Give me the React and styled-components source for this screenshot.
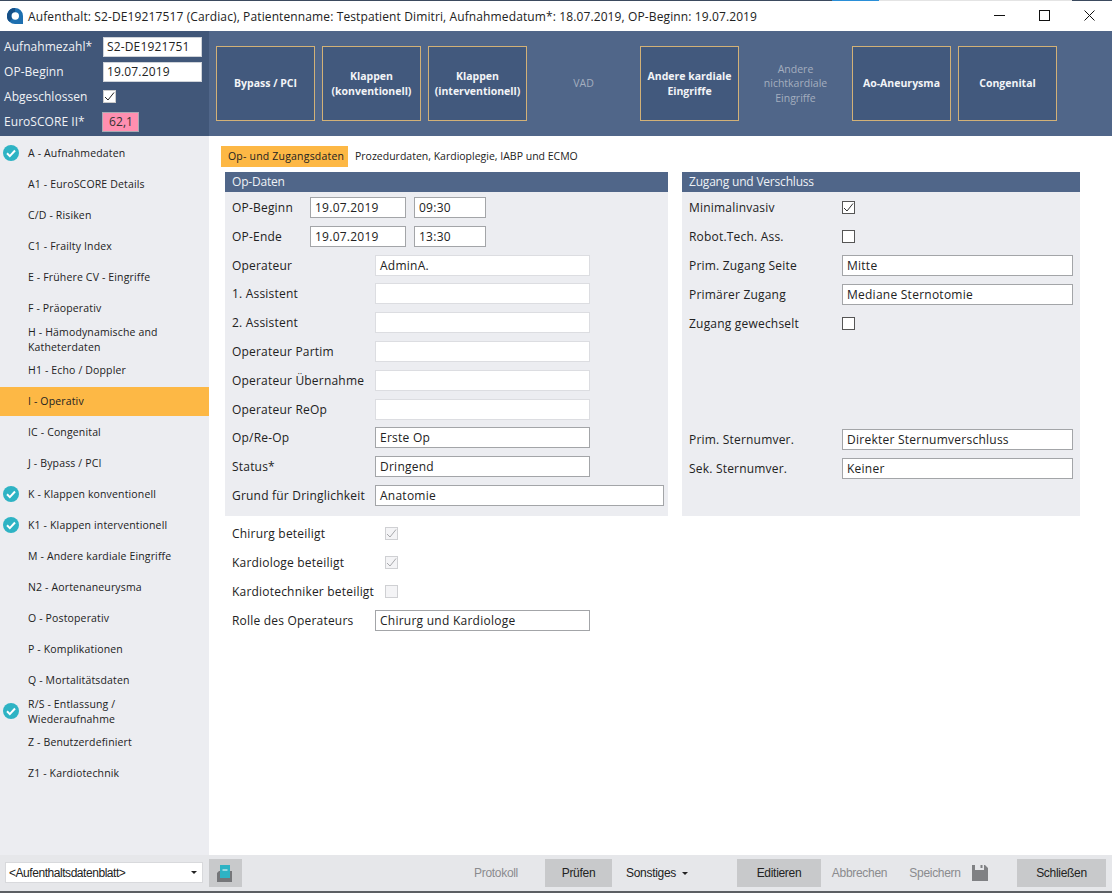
import React from 'react';
import styled, { createGlobalStyle } from 'styled-components';

const Global = createGlobalStyle`
  html, body { margin: 0; padding: 0; background: #fff; }
  body { font-family: "Open Sans", "Noto Sans", sans-serif; color: #222; }
  * { box-sizing: border-box; }
`;
const Win = styled.div`width:1112px;height:893px;display:flex;flex-direction:column;overflow:hidden;background:#fff;`;
const TopEdge = styled.div`height:1px;flex:none;background:linear-gradient(90deg,#3b4a5e 0,#3b4a5e 832px,#2a8fd8 832px,#2a8fd8 879px,#e4e4e4 879px,#e4e4e4 1072px,#3b4a5e 1072px);`;
const TitleBar = styled.div`height:30px;flex:none;display:flex;align-items:center;padding-left:7px;background:#fff;`;
const TitleText = styled.div`margin-left:5px;font-size:12px;letter-spacing:.115px;color:#222;white-space:nowrap;flex:1;`;
const WinBtn = styled.div`width:45px;height:30px;padding-bottom:2px;display:flex;align-items:center;justify-content:center;flex:none;`;
const Header = styled.div`height:105px;flex:none;display:flex;background:#506689;`;
const HeaderInfo = styled.div`width:209px;flex:none;background:#415779;padding:3px 7px 0 4px;`;
const InfoRow = styled.div`display:flex;align-items:center;height:25px;color:#f0f2f5;font-size:12px;letter-spacing:.05px;`;
const InfoLabel = styled.span`width:99px;flex:none;white-space:nowrap;`;
const InfoField = styled.div`width:99px;height:20px;background:#fff;color:#222;padding-left:4px;line-height:20px;font-size:12px;letter-spacing:.15px;box-shadow:inset 0 0 0 1px #cfd3d9;white-space:nowrap;overflow:hidden;`;
const ScoreField = styled.div`width:37px;height:20px;margin-left:-1px;background:#ff8fb0;color:#333;text-align:right;padding-right:5px;line-height:18px;font-size:12px;border:1px solid #a7a9b3;`;
const Tiles = styled.div`display:flex;gap:7px;padding:15px 0 0 7px;`;
const Tile = styled.div`width:99px;height:75px;display:flex;align-items:center;justify-content:center;text-align:center;padding:0 2px;font-size:10.5px;line-height:14.5px;font-weight:${p=>p.$off?400:700};color:${p=>p.$off?'#a4aebf':'#f2f4f7'};background:${p=>p.$off?'transparent':'#42597d'};border:1px solid ${p=>p.$off?'transparent':'#d2b177'};`;
const Body = styled.div`flex:1;min-height:0;display:flex;`;
const Side = styled.nav`width:209px;flex:none;background:#ecedf1;padding-top:3px;`;
const NavItem = styled.div`position:relative;height:29px;margin-bottom:2px;padding-left:28px;display:flex;align-items:center;font-size:10.5px;letter-spacing:.15px;line-height:14.5px;color:#222;white-space:pre-line;background:${p=>p.$active?'#fdb845':'transparent'};`;
const NavCheck = styled.svg`position:absolute;left:3px;top:6px;width:16px;height:16px;`;
const Main = styled.main`flex:1;min-width:0;padding:10px 0 0 12px;`;
const Tabs = styled.div`display:flex;align-items:center;height:21px;`;
const TabItem = styled.div`height:21px;line-height:21px;padding:0 7px;width:${p=>p.$active?'127px':'auto'};font-size:10.5px;white-space:nowrap;background:${p=>p.$active?'#fdb845':'transparent'};color:#222;letter-spacing:${p=>p.$active?'.2px':'0'};`;
const Panels = styled.div`display:flex;gap:14px;margin:5px 0 0 4px;align-items:stretch;`;
const Panel = styled.section`width:${p=>p.$w}px;background:#ecedf1;padding-bottom:6px;`;
const PanelHead = styled.div`height:20px;line-height:20px;background:#506689;color:#eef1f5;padding-left:7px;font-size:12px;letter-spacing:-.2px;margin-bottom:1.2px;`;
const Row = styled.div`height:${p=>p.$h||28.8}px;display:flex;align-items:center;padding-left:7px;font-size:12px;letter-spacing:.2px;color:#222;`;
const Label = styled.span`width:${p=>p.$w}px;flex:none;white-space:nowrap;`;
const Input = styled.div`width:${p=>p.$w}px;height:21px;line-height:19px;padding-left:4px;font-size:12px;letter-spacing:.25px;flex:none;margin-right:${p=>p.$mr||0}px;background:#fff;color:#222;border:1px solid ${p=>p.$soft?'#dcdde1':'#a3a5a8'};white-space:nowrap;`;
const Box = styled.span`width:13px;height:13px;flex:none;background:${p=>p.$bg||'#fff'};border:1px solid ${p=>p.$c||'#555'};display:flex;align-items:center;justify-content:center;`;
const Extra = styled.div`margin:3px 0 0 4px;width:443px;`;
const Footer = styled.footer`height:38px;flex:none;background:#e6e7ea;border-bottom:2px solid #5c5f63;display:flex;align-items:flex-start;font-family:"Liberation Sans",Arial,sans-serif;font-size:12px;letter-spacing:-.3px;color:#222;`;
const SelectBox = styled.div`width:198px;height:21px;margin:7px 6px 0 5px;background:#fff;border:1px solid #d8d9dc;display:flex;align-items:center;justify-content:space-between;padding:0 5px 0 3px;flex:none;letter-spacing:-.45px;`;
const Caret = styled.span`width:0;height:0;border-left:3px solid transparent;border-right:3px solid transparent;border-top:3px solid ${p=>p.$c||'#222'};display:inline-block;flex:none;`;
const IconBtn = styled.div`width:33px;height:28px;margin-top:4px;background:#c8c9cb;display:flex;align-items:center;justify-content:center;flex:none;`;
const Spacer = styled.div`flex:none;width:${p=>p.$w}px;`;
const Btn = styled.div`height:28px;margin-top:4px;width:${p=>p.$w}px;flex:none;display:flex;align-items:center;justify-content:center;white-space:nowrap;gap:${p=>p.$gap||0}px;background:${p=>p.$fill?'#c8c9cb':'transparent'};color:${p=>p.$off?'#8a8b8e':'#222'};svg{flex:none;}`;

const nav = [
  ['A - Aufnahmedaten',1],['A1 - EuroSCORE Details'],['C/D - Risiken'],['C1 - Frailty Index'],['E - Frühere CV - Eingriffe'],['F - Präoperativ'],
  ['H - Hämodynamische and\nKatheterdaten'],['H1 - Echo / Doppler'],['I - Operativ',0,1],['IC - Congenital'],['J - Bypass / PCI'],['K - Klappen konventionell',1],
  ['K1 - Klappen interventionell',1],['M - Andere kardiale Eingriffe'],['N2 - Aortenaneurysma'],['O - Postoperativ'],['P - Komplikationen'],['Q - Mortalitätsdaten'],
  ['R/S - Entlassung /\nWiederaufnahme',1],['Z - Benutzerdefiniert'],['Z1 - Kardiotechnik'],
];
const tiles = [['Bypass / PCI'],['Klappen (konventionell)'],['Klappen (interventionell)'],['VAD',1],['Andere kardiale Eingriffe'],['Andere nichtkardiale Eingriffe',1],['Ao-Aneurysma'],['Congenital']];
const Tick = ({c='#222',s=11}) => <svg width={s} height={s} viewBox="0 0 11 11"><path d="M1 6l3 3 6-7.500" fill="none" stroke={c} strokeWidth="1"/></svg>;
const Check = ({on,c,tc,bg}) => <Box $c={c} $bg={bg}>{on && <Tick c={tc}/>}</Box>;
const TextRow = ({label,value,w=215,soft,h}) => <Row $h={h}><Label $w={143}>{label}</Label><Input $w={w} $soft={soft}>{value}</Input></Row>;
const RightRow = ({label,value}) => <Row $h={29}><Label $w={153}>{label}</Label><Input $w={231}>{value}</Input></Row>;
const RightCheck = ({label,on}) => <Row $h={29}><Label $w={153}>{label}</Label><Check on={on} c="#555" tc="#333"/></Row>;
const DisCheck = ({label,on}) => <Row $h={29}><Label $w={153}>{label}</Label><Check on={on} c="#cfd0d3" tc="#a8a9ac" bg="#f4f4f6"/></Row>;

export default function App(){
  return <Win><Global/>
    <TopEdge/>
    <TitleBar>
      <svg width="16" height="16" viewBox="0 0 16 16"><path d="M8 0a8 8 0 0 0-5.600 13.700A8 8 0 0 0 8 16h8V8a8 8 0 0 0-8-8z" fill="#1d6fb0"/><path d="M8 0a8 8 0 0 0-5.600 13.700L5.400 10.600A3.700 3.700 0 0 1 8 4.300z" fill="#175086"/><circle cx="8.300" cy="8" r="3.700" fill="#fff"/></svg>
      <TitleText>Aufenthalt: S2-DE19217517 (Cardiac), Patientenname: Testpatient Dimitri, Aufnahmedatum*: 18.07.2019, OP-Beginn: 19.07.2019</TitleText>
      <WinBtn><svg width="11" height="11" viewBox="0 0 11 11"><path d="M0 5.500h11" stroke="#111"/></svg></WinBtn>
      <WinBtn><svg width="11" height="11" viewBox="0 0 11 11"><rect x=".5" y=".5" width="10" height="10" fill="none" stroke="#111"/></svg></WinBtn>
      <WinBtn><svg width="11" height="11" viewBox="0 0 11 11"><path d="M.5.5l10 10M10.500.5l-10 10" stroke="#111" fill="none"/></svg></WinBtn>
    </TitleBar>
    <Header>
      <HeaderInfo>
        <InfoRow><InfoLabel>Aufnahmezahl*</InfoLabel><InfoField>S2-DE1921751</InfoField></InfoRow>
        <InfoRow><InfoLabel>OP-Beginn</InfoLabel><InfoField>19.07.2019</InfoField></InfoRow>
        <InfoRow><InfoLabel>Abgeschlossen</InfoLabel><Check on c="#ccc" tc="#222"/></InfoRow>
        <InfoRow><InfoLabel>EuroSCORE II*</InfoLabel><ScoreField>62,1</ScoreField></InfoRow>
      </HeaderInfo>
      <Tiles>{tiles.map(([t,o])=><Tile key={t} $off={o}>{t}</Tile>)}</Tiles>
    </Header>
    <Body>
      <Side>{nav.map(([t,c,a])=><NavItem key={t} $active={a}>{c?<NavCheck viewBox="0 0 16 16"><circle cx="8" cy="8" r="8" fill="#2eb3c4"/><path d="M4 8.300l2.800 2.800L12 5.500" fill="none" stroke="#fff" strokeWidth="2"/></NavCheck>:null}<span>{t}</span></NavItem>)}</Side>
      <Main>
        <Tabs><TabItem $active>Op- und Zugangsdaten</TabItem><TabItem>Prozedurdaten, Kardioplegie, IABP und ECMO</TabItem></Tabs>
        <Panels>
          <Panel $w={443}>
            <PanelHead>Op-Daten</PanelHead>
            <Row><Label $w={78}>OP-Beginn</Label><Input $w={96} $mr={8}>19.07.2019</Input><Input $w={72}>09:30</Input></Row>
            <Row><Label $w={78}>OP-Ende</Label><Input $w={96} $mr={8}>19.07.2019</Input><Input $w={72}>13:30</Input></Row>
            <TextRow label="Operateur" value="AdminA." soft/>
            <TextRow label="1. Assistent" soft/>
            <TextRow label="2. Assistent" soft/>
            <TextRow label="Operateur Partim" soft/>
            <TextRow label="Operateur Übernahme" soft/>
            <TextRow label="Operateur ReOp" soft/>
            <TextRow label="Op/Re-Op" value="Erste Op"/>
            <TextRow label="Status*" value="Dringend"/>
            <TextRow label="Grund für Dringlichkeit" value="Anatomie" w={289}/>
          </Panel>
          <Panel $w={398}>
            <PanelHead>Zugang und Verschluss</PanelHead>
            <RightCheck label="Minimalinvasiv" on/>
            <RightCheck label="Robot.Tech. Ass."/>
            <RightRow label="Prim. Zugang Seite" value="Mitte"/>
            <RightRow label="Primärer Zugang" value="Mediane Sternotomie"/>
            <RightCheck label="Zugang gewechselt"/>
            <Row $h={87}/>
            <RightRow label="Prim. Sternumver." value="Direkter Sternumverschluss"/>
            <RightRow label="Sek. Sternumver." value="Keiner"/>
          </Panel>
        </Panels>
        <Extra>
          <DisCheck label="Chirurg beteiligt" on/>
          <DisCheck label="Kardiologe beteiligt" on/>
          <DisCheck label="Kardiotechniker beteiligt"/>
          <TextRow label="Rolle des Operateurs" value="Chirurg und Kardiologe" h={29}/>
        </Extra>
      </Main>
    </Body>
    <Footer>
      <SelectBox>&lt;Aufenthaltsdatenblatt&gt;<Caret/></SelectBox>
      <IconBtn><svg width="17" height="17" viewBox="0 0 17 17"><path d="M2 6h13v11H0V8z" fill="#757679"/><rect x="3" y="0" width="10" height="13" fill="#2eb3c4"/><path d="M5.500 5h5" stroke="#fff"/></svg></IconBtn>
      <Spacer $w={224}/>
      <Btn $w={60} $off>Protokoll</Btn>
      <Spacer $w={19}/>
      <Btn $w={67} $fill>Prüfen</Btn>
      <Spacer $w={14}/>
      <Btn $w={62} $gap={6}>Sonstiges <Caret/></Btn>
      <Spacer $w={49}/>
      <Btn $w={84} $fill>Editieren</Btn>
      <Spacer $w={12}/>
      <Btn $w={53} $off>Abbrechen</Btn>
      <Spacer $w={24}/>
      <Btn $w={77} $off $gap={11}>Speichern <svg width="16" height="16" viewBox="0 0 16 16"><path d="M0 0h3v5h9V0h1l3 3v13H0zM8.500 0h2v3h-2z" fill="#808184"/></svg></Btn>
      <Spacer $w={30}/>
      <Btn $w={89} $fill>Schließen</Btn>
    </Footer>
  </Win>;
}
